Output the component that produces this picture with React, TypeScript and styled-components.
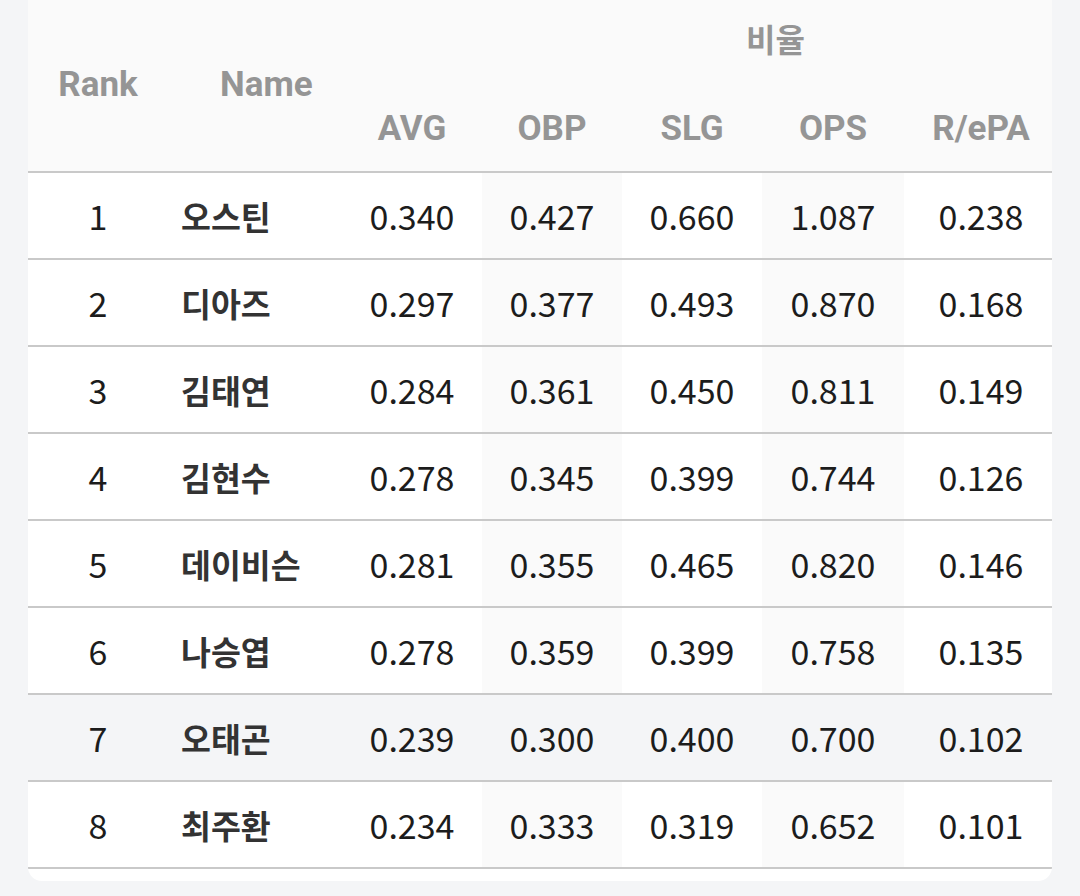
import React from "react";
import styled, { createGlobalStyle } from "styled-components";

const Global = createGlobalStyle`
  html, body { margin: 0; padding: 0; background: #f4f5f7; }
  body { font-family: "Noto Sans CJK KR", "Noto Sans", sans-serif; }
`;

const Page = styled.div`
  width: 1080px;
  height: 896px;
  padding: 0 28px;
  box-sizing: border-box;
`;

const Card = styled.div`
  width: 1024px;
  background: #ffffff;
  border-radius: 0 0 14px 14px;
  overflow: hidden;
  padding-bottom: 12px;
`;

const Table = styled.table`
  width: 1024px;
  border-collapse: collapse;
  table-layout: fixed;
`;

const Head = styled.thead`
  background: #fafafa;
`;

const Th = styled.th<{ $align?: string; $pl?: number; $pt?: number; $h?: number; $valign?: string }>`
  font-family: Roboto, "Noto Sans CJK KR", sans-serif;
  font-weight: 700;
  font-size: 35px;
  color: #959595;
  text-align: ${(p) => p.$align || "center"};
  padding: ${(p) => p.$pt ?? 0}px 0 0 ${(p) => p.$pl ?? 0}px;
  height: ${(p) => p.$h ?? 0}px;
  vertical-align: ${(p) => p.$valign || "middle"};
  line-height: 40px;
  box-sizing: border-box;
`;

const GroupTh = styled(Th)`
  font-family: "Noto Sans CJK KR", sans-serif;
  font-size: 32px;
`;

const HeadRow = styled.tr<{ $border?: boolean }>`
  ${(p) => (p.$border ? "border-bottom: 2px solid #c9c9c9;" : "")}
`;

const Row = styled.tr<{ $highlight?: boolean }>`
  height: 87px;
  border-bottom: 2px solid #c9c9c9;
  background: ${(p) => (p.$highlight ? "#f4f5f7" : "transparent")};
`;

const Td = styled.td<{ $shade?: boolean; $pl?: number }>`
  font-family: "Noto Sans CJK KR", sans-serif;
  font-weight: 400;
  font-size: 34px;
  color: #1c1c1c;
  text-align: center;
  padding: 0 0 0 ${(p) => p.$pl ?? 0}px;
  background: ${(p) => (p.$shade ? "#fafafa" : "transparent")};
  line-height: 40px;
`;

const NameTd = styled.td`
  font-family: "Noto Sans CJK KR", sans-serif;
  font-weight: 700;
  font-size: 32.5px;
  color: #333333;
  text-align: left;
  padding: 0 0 0 13px;
  line-height: 40px;
`;

type Player = { rank: number; name: string; stats: string[] };

const players: Player[] = [
  { rank: 1, name: "오스틴", stats: ["0.340", "0.427", "0.660", "1.087", "0.238"] },
  { rank: 2, name: "디아즈", stats: ["0.297", "0.377", "0.493", "0.870", "0.168"] },
  { rank: 3, name: "김태연", stats: ["0.284", "0.361", "0.450", "0.811", "0.149"] },
  { rank: 4, name: "김현수", stats: ["0.278", "0.345", "0.399", "0.744", "0.126"] },
  { rank: 5, name: "데이비슨", stats: ["0.281", "0.355", "0.465", "0.820", "0.146"] },
  { rank: 6, name: "나승엽", stats: ["0.278", "0.359", "0.399", "0.758", "0.135"] },
  { rank: 7, name: "오태곤", stats: ["0.239", "0.300", "0.400", "0.700", "0.102"] },
  { rank: 8, name: "최주환", stats: ["0.234", "0.333", "0.319", "0.652", "0.101"] },
];

const statHeaders = ["AVG", "OBP", "SLG", "OPS", "R/ePA"];
const widths = [140, 174, 140, 140, 140, 142, 148];

export default function App() {
  return (
    <>
      <Global />
      <Page>
        <Card>
          <Table>
            <colgroup>
              {widths.map((w, i) => (
                <col key={i} style={{ width: w }} />
              ))}
            </colgroup>
            <Head>
              <HeadRow>
                <Th rowSpan={2} $valign="top" $pt={65}>
                  Rank
                </Th>
                <Th rowSpan={2} $align="left" $pl={52} $valign="top" $pt={65}>
                  Name
                </Th>
                <GroupTh colSpan={5} $align="left" $pl={404} $pt={4} $h={72} $valign="middle">
                  비율
                </GroupTh>
              </HeadRow>
              <HeadRow $border>
                {statHeaders.map((h, i) => (
                  <Th key={h} $h={100} $pt={14} $pl={i === 4 ? 6 : 0}>
                    {h}
                  </Th>
                ))}
              </HeadRow>
            </Head>
            <tbody>
              {players.map((p) => {
                const hl = p.rank === 7;
                return (
                  <Row key={p.rank} $highlight={hl}>
                    <Td>{p.rank}</Td>
                    <NameTd>{p.name}</NameTd>
                    {p.stats.map((s, i) => (
                      <Td key={i} $shade={!hl && (i === 1 || i === 3)} $pl={i === 4 ? 6 : 0}>
                        {s}
                      </Td>
                    ))}
                  </Row>
                );
              })}
            </tbody>
          </Table>
        </Card>
      </Page>
    </>
  );
}
